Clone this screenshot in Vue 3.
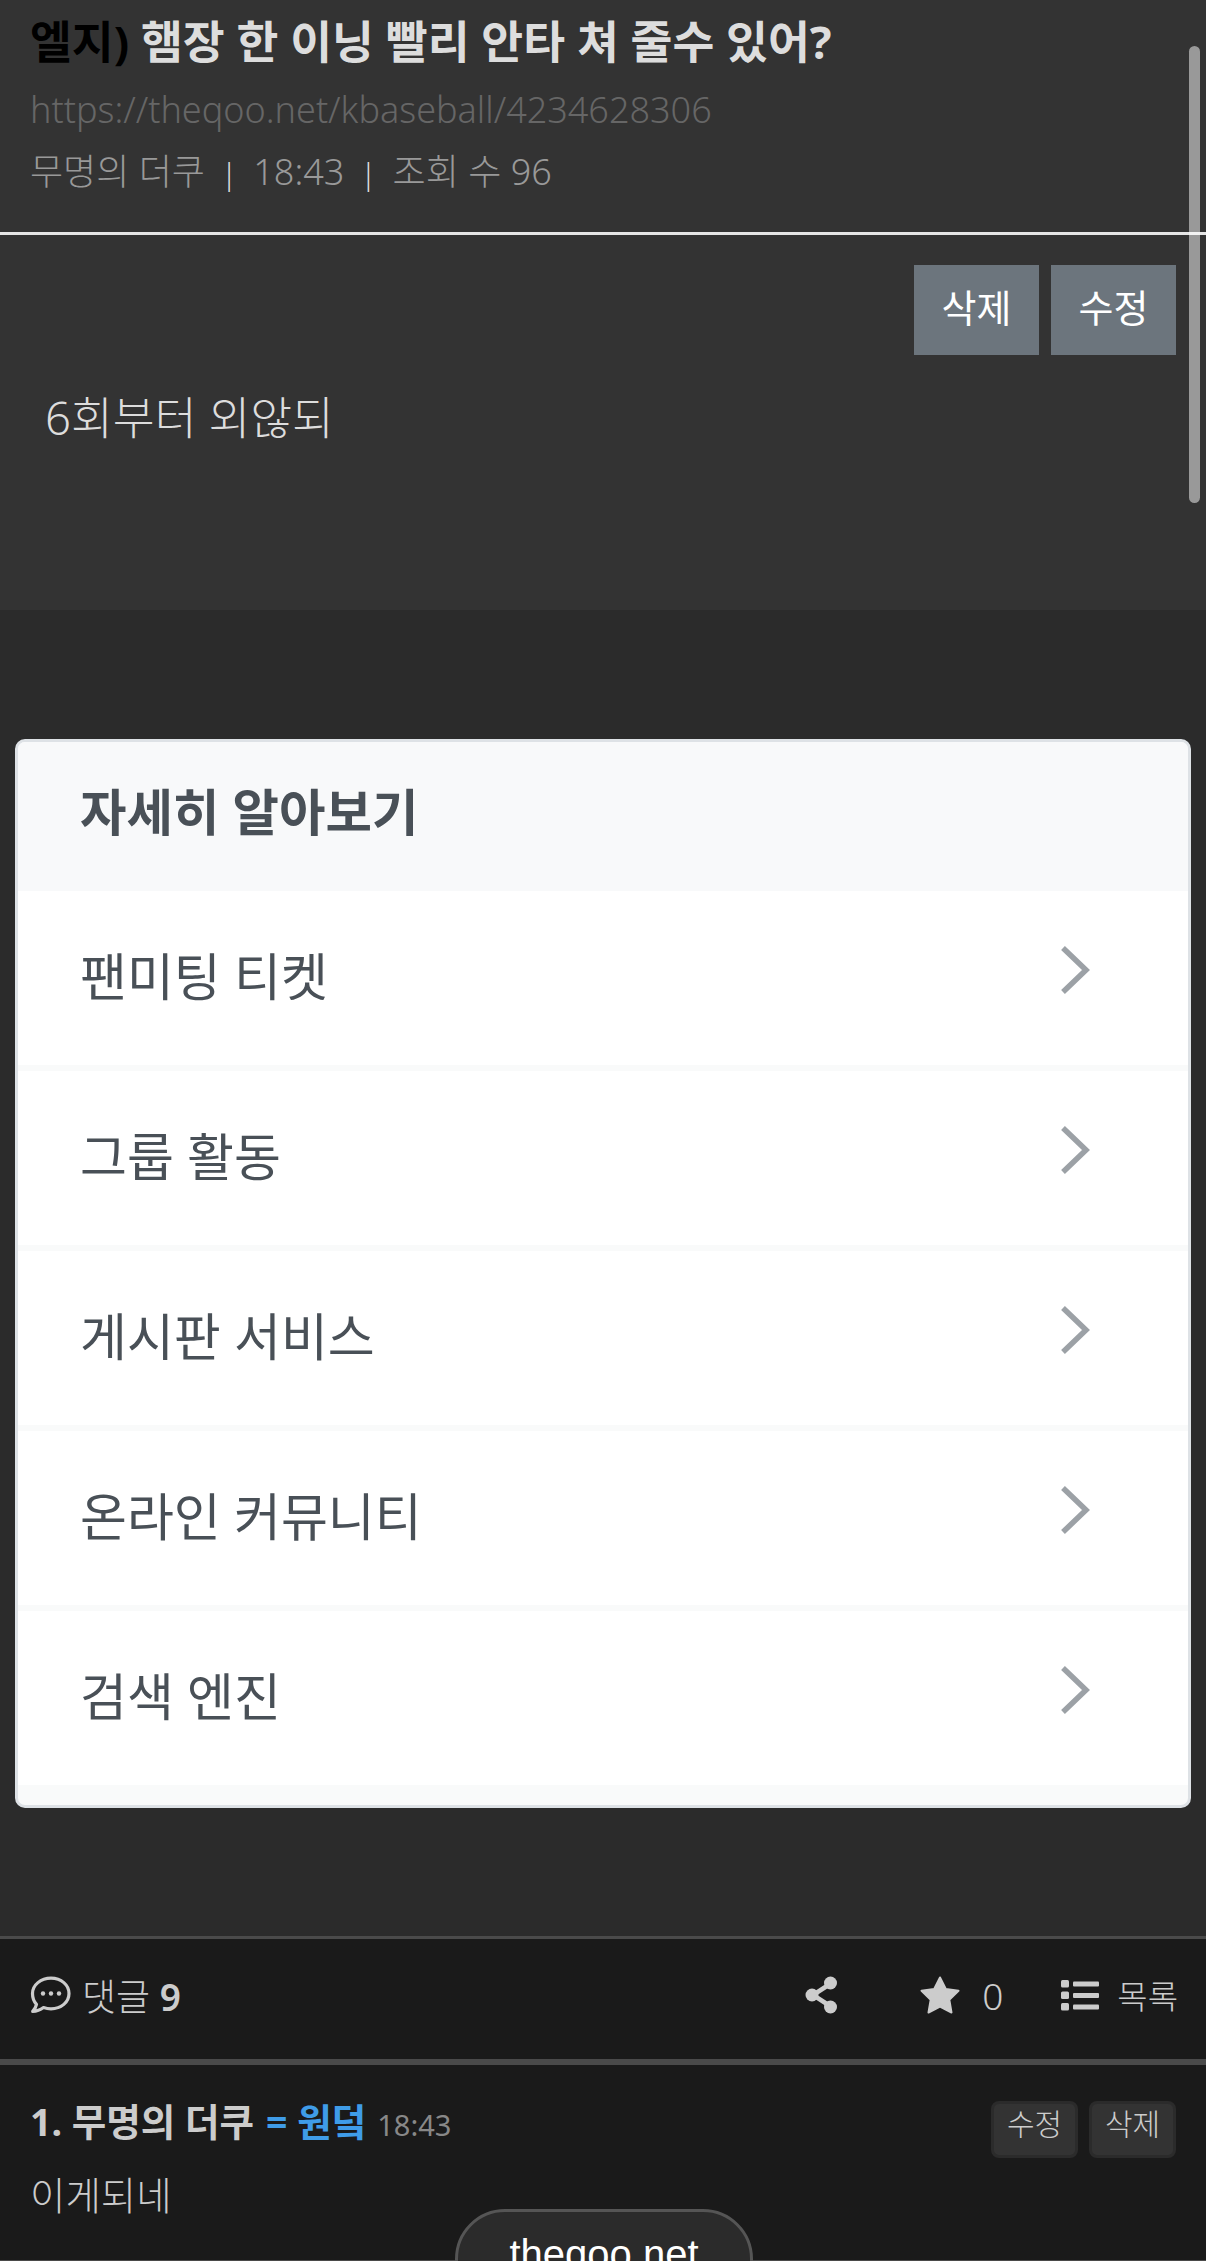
<template>
  <div class="page">
    <!-- 글 본문 -->
    <section class="post">
      <header class="post-head">
        <h1 class="title"><span class="cat">엘지)</span> 햄장 한 이닝 빨리 안타 쳐 줄수 있어?</h1>
        <div class="url">https://theqoo.net/kbaseball/4234628306</div>
        <div class="meta">무명의 더쿠<i>|</i>18:43<i>|</i>조회 수 96</div>
      </header>
      <div class="post-actions">
        <button class="btn-gray">삭제</button>
        <button class="btn-gray">수정</button>
      </div>
      <p class="post-text">6회부터 외않되</p>
    </section>

    <!-- 자세히 알아보기 카드 -->
    <section class="ad-wrap">
      <div class="card">
        <div class="card-title">자세히 알아보기</div>
        <a v-for="item in links" :key="item" class="card-row">
          <span>{{ item }}</span>
          <svg width="32" height="50" viewBox="0 0 32 50">
            <path d="M4 3 L27 25 L4 47" fill="none" stroke="#9ca1a6" stroke-width="5.5" />
          </svg>
        </a>
      </div>
    </section>

    <!-- 하단 툴바 -->
    <div class="toolbar">
      <div class="tool comments">
        <svg width="41" height="38" viewBox="0 0 41 38">
          <path d="M21 2.2c10.2 0 18 6.700 18 15.300s-7.800 15.300-18 15.300c-2.700 0-5.200-.5-7.500-1.300-2.600 2-6.300 3.800-10.800 3.900 1.800-2 3.300-4.500 3.800-7C3.900 25.600 2.500 21.800 2.500 17.500 2.500 8.900 10.800 2.200 21 2.200z" fill="none" stroke="#ccc" stroke-width="3.200" stroke-linejoin="round" />
          <circle cx="13" cy="17.500" r="2.200" fill="#ccc" />
          <circle cx="21" cy="17.500" r="2.200" fill="#ccc" />
          <circle cx="29" cy="17.500" r="2.200" fill="#ccc" />
        </svg>
        <span>댓글 <b>9</b></span>
      </div>
      <div class="tool-right">
        <svg class="share" width="33" height="38" viewBox="0 0 33 38">
          <path d="M25 8 L8 19 L25 30" fill="none" stroke="#ccc" stroke-width="4.500" />
          <circle cx="25.500" cy="7" r="6.500" fill="#ccc" />
          <circle cx="7" cy="19" r="6.500" fill="#ccc" />
          <circle cx="25.500" cy="31" r="6.500" fill="#ccc" />
        </svg>
        <div class="tool star">
          <svg width="40" height="38" viewBox="0 0 40 38">
            <path d="M20 1.500 L25.800 13 L38.500 14.800 L29.300 23.700 L31.500 36.500 L20 30.500 L8.500 36.500 L10.700 23.700 L1.500 14.800 L14.200 13 Z" fill="#ccc" stroke="#ccc" stroke-width="2" stroke-linejoin="round" />
          </svg>
          <span>0</span>
        </div>
        <div class="tool list">
          <svg width="38" height="32" viewBox="0 0 38 32">
            <rect x="0" y="1" width="8" height="7.500" rx="1.500" fill="#ccc" />
            <rect x="0" y="12.500" width="8" height="7.500" rx="1.500" fill="#ccc" />
            <rect x="0" y="24" width="8" height="7.500" rx="1.500" fill="#ccc" />
            <rect x="12" y="2.500" width="26" height="5" rx="1" fill="#ccc" />
            <rect x="12" y="14" width="26" height="5" rx="1" fill="#ccc" />
            <rect x="12" y="25.500" width="26" height="5" rx="1" fill="#ccc" />
          </svg>
          <span>목록</span>
        </div>
      </div>
    </div>

    <!-- 댓글 -->
    <section class="comment">
      <div class="comment-head">
        <div class="comment-who">
          <b>1. 무명의 더쿠</b>
          <b class="op">= 원덬</b>
          <span class="time">18:43</span>
        </div>
        <div class="comment-btns">
          <button class="btn-dark">수정</button>
          <button class="btn-dark">삭제</button>
        </div>
      </div>
      <p class="comment-text">이게되네</p>
    </section>

    <!-- 스크롤바, 떠있는 도메인 표시 -->
    <div class="scrollbar"></div>
    <div class="domain-pill">theqoo.net</div>
  </div>
</template>

<script setup>
const links = ['팬미팅 티켓', '그룹 활동', '게시판 서비스', '온라인 커뮤니티', '검색 엔진']
</script>

<style>
html, body {
  margin: 0;
  background: #1a1a1a;
}
</style>

<style scoped>
.page {
  position: relative;
  width: 1206px;
  height: 2261px;
  overflow: hidden;
  background: #2b2b2b;
  font-family: "Noto Sans", "Noto Sans CJK KR", sans-serif;
  color: #ddd;
}

.post {
  height: 610px;
  background: #333;
}
.post-head {
  height: 232px;
  box-sizing: border-box;
  padding: 10px 30px 0;
}
.title {
  margin: 0;
  font-size: 45.500px;
  line-height: 62px;
  font-weight: 700;
  color: #ddd;
  white-space: nowrap;
}
.cat {
  color: #000;
}
.url {
  margin-top: 7px;
  font-size: 36px;
  line-height: 62px;
  font-weight: 300;
  color: #666;
}
.meta {
  font-size: 36px;
  line-height: 62px;
  font-weight: 300;
  color: #999;
}
.meta i {
  font-style: normal;
  color: #ddd;
  margin: 0 16px;
  font-size: 30px;
}
.post-actions {
  display: flex;
  justify-content: flex-end;
  gap: 12px;
  padding: 30px 30px 0 0;
  border-top: 3px solid #e6e6e6;
}
.btn-gray {
  width: 125px;
  height: 90px;
  border: 0;
  background: #6c757d;
  color: #fff;
  font: 400 38px "Noto Sans", "Noto Sans CJK KR", sans-serif;
  padding: 0 0 10px;
}
.post-text {
  margin: 30px 0 0 45px;
  font-size: 45.500px;
  line-height: 64px;
  font-weight: 300;
  color: #ddd;
}

.ad-wrap {
  height: 1326px;
  box-sizing: border-box;
  padding: 129px 15px 0 15px;
}
.card {
  height: 1069px;
  box-sizing: border-box;
  background: #f9fafa;
  border: 3px solid #dee2e6;
  border-radius: 10px;
  overflow: hidden;
}
.card-title {
  height: 149px;
  box-sizing: border-box;
  padding: 0 0 16px 62px;
  display: flex;
  align-items: center;
  background: #f8f9fa;
  font-size: 50.500px;
  font-weight: 700;
  color: #495057;
}
.card-row {
  height: 174px;
  margin-bottom: 6px;
  box-sizing: border-box;
  background: #fff;
  padding: 0 97px 8px 62px;
  display: flex;
  align-items: center;
  justify-content: space-between;
  font-size: 51px;
  font-weight: 400;
  color: #495057;
}
.card-row svg {
  margin-top: -8px;
}

.toolbar {
  box-sizing: border-box;
  border-top: 3px solid #4a4a4a;
  height: 123px;
  background: #1a1a1a;
  padding: 0 28px 8px 30px;
  display: flex;
  align-items: center;
  justify-content: space-between;
  color: #ccc;
  font-size: 37px;
  font-weight: 300;
}
.tool {
  display: flex;
  align-items: center;
}
.comments {
  gap: 11px;
}
.comments b {
  font-weight: 600;
}
.tool-right {
  display: flex;
  align-items: center;
}
.star {
  margin-left: 82px;
  gap: 22px;
}
.list {
  margin-left: 58px;
  gap: 18px;
}
.list span {
  font-size: 33px;
}

.comment {
  box-sizing: border-box;
  border-top: 6px solid #4a4a4a;
  border-bottom: 1px solid #4a4a4a;
  background: #1a1a1a;
  height: 202px;
  padding: 27px 30px 0;
}
.comment-head {
  display: flex;
  justify-content: space-between;
  align-items: flex-start;
}
.comment-who {
  font-size: 37.500px;
  line-height: 60px;
  color: #ccc;
  white-space: nowrap;
}
.op {
  color: #3f9ce8;
  margin-left: 12px;
}
.time {
  margin-left: 11px;
  font-size: 29px;
  color: #888;
}
.comment-btns {
  display: flex;
  gap: 11px;
  margin-top: 9px;
}
.btn-dark {
  display: block;
  width: 87px;
  height: 57px;
  box-sizing: border-box;
  padding: 0;
  background: #333;
  border: 3px solid #2b2b2b;
  border-radius: 8px;
  color: #ccc;
  font: 300 30px/40px "Noto Sans", "Noto Sans CJK KR", sans-serif;
  display: flex;
  justify-content: center;
  align-items: flex-start;
}
.comment-text {
  margin: 7px 0 0;
  font-size: 38.500px;
  line-height: 60px;
  font-weight: 300;
  color: #ccc;
}

.scrollbar {
  position: absolute;
  top: 46px;
  right: 6px;
  width: 11px;
  height: 457px;
  border-radius: 6px;
  background: rgba(255, 255, 255, 0.5);
}
.domain-pill {
  position: absolute;
  left: 455px;
  top: 2209px;
  width: 298px;
  height: 110px;
  box-sizing: border-box;
  border: 3px solid #555;
  border-radius: 50px;
  background: #2b2b2b;
  color: #fff;
  text-align: center;
  padding-top: 17px;
  font: 400 40px/50px "Liberation Sans", sans-serif;
}
</style>
